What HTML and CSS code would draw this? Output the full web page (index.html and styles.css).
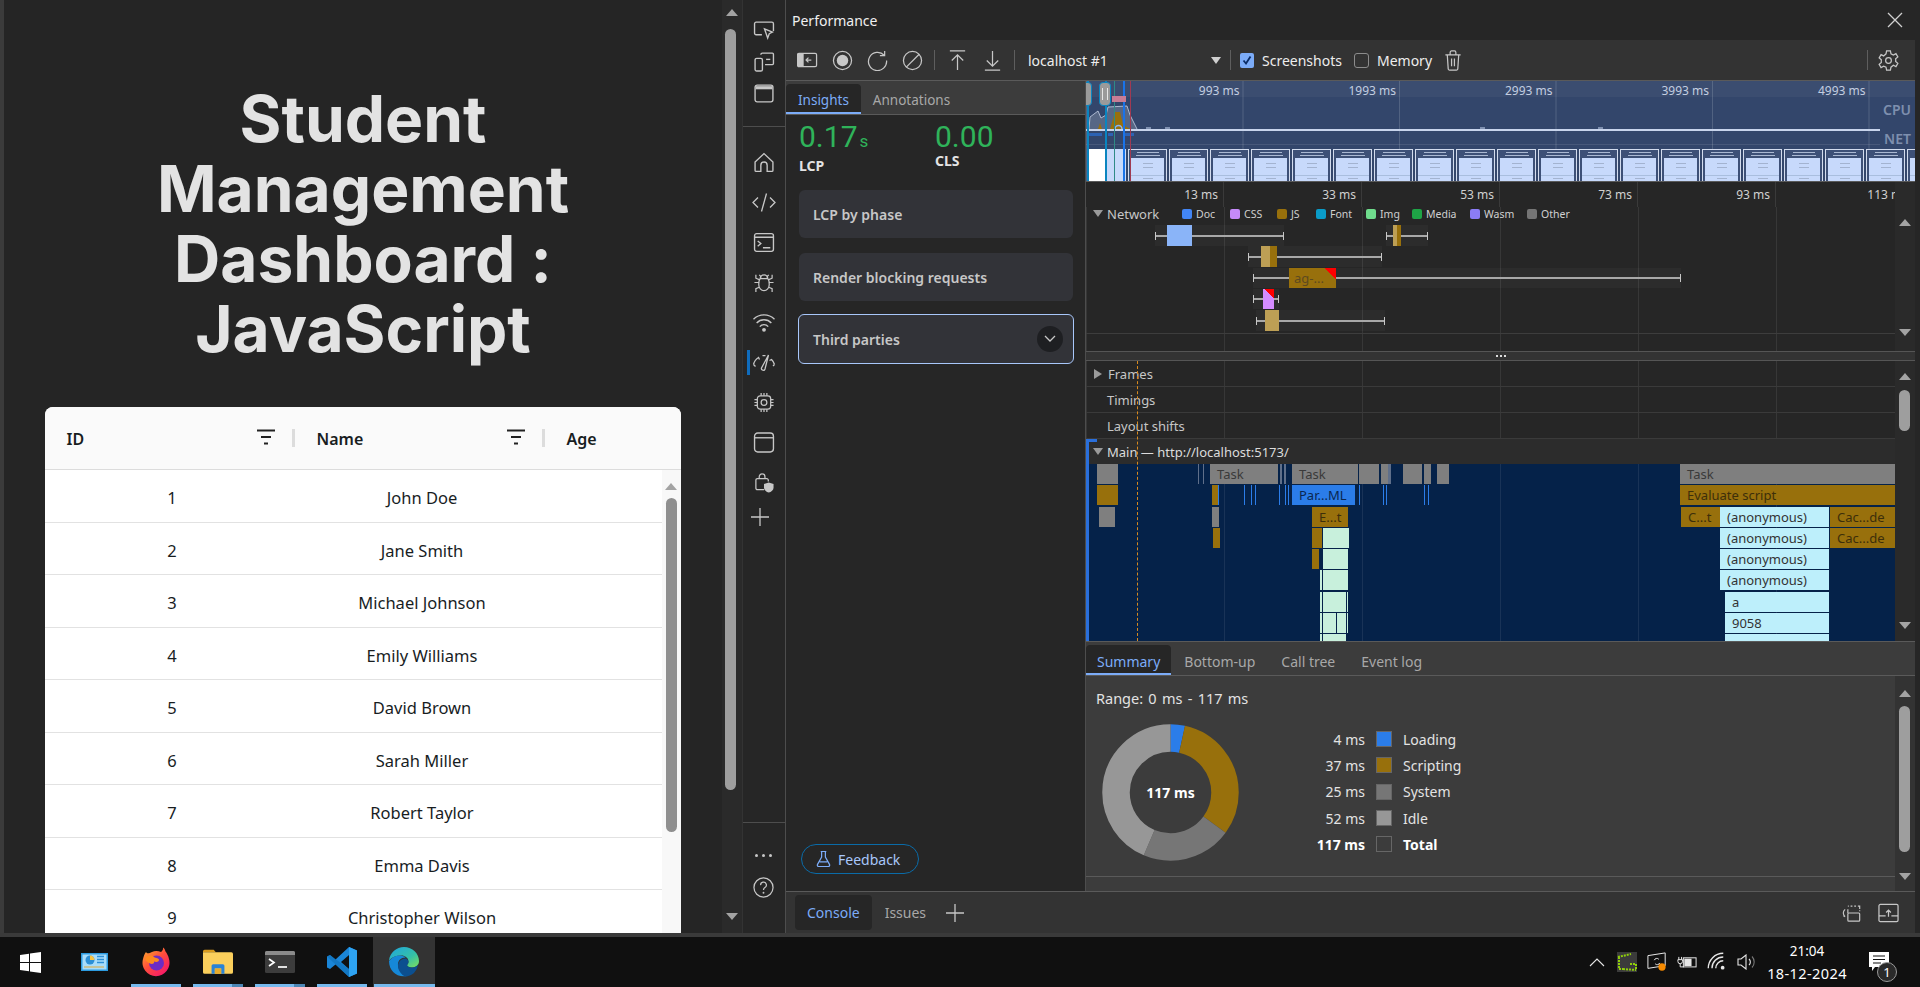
FILE: index.html
```html
<!DOCTYPE html>
<html lang="en">
<head>
    <meta charset="UTF-8">
    <title>Student Management Dashboard : JavaScript</title>
    <link rel="stylesheet" href="styles.css">
</head>
<body>
    <div class="desktop">
        <!-- The page being inspected -->
        <main class="page-pane">
            <h1 class="page-title">Student Management Dashboard : JavaScript</h1>
            <div class="grid-card">
                <div class="grid-head">
                    <div class="grid-col">
                        <span>ID</span>
                        <svg class="filter-icon" viewBox="0 0 18 16"><path d="M0 1.5h18M4 8h10M7 14.5h4" /></svg>
                        <i class="grid-sep"></i>
                    </div>
                    <div class="grid-col">
                        <span>Name</span>
                        <svg class="filter-icon" viewBox="0 0 18 16"><path d="M0 1.5h18M4 8h10M7 14.5h4" /></svg>
                        <i class="grid-sep"></i>
                    </div>
                    <div class="grid-col"><span>Age</span></div>
                </div>
                <div class="grid-body">
                    <div class="grid-rows">
                        <div class="grid-row"><div>1</div><div>John Doe</div></div>
                        <div class="grid-row"><div>2</div><div>Jane Smith</div></div>
                        <div class="grid-row"><div>3</div><div>Michael Johnson</div></div>
                        <div class="grid-row"><div>4</div><div>Emily Williams</div></div>
                        <div class="grid-row"><div>5</div><div>David Brown</div></div>
                        <div class="grid-row"><div>6</div><div>Sarah Miller</div></div>
                        <div class="grid-row"><div>7</div><div>Robert Taylor</div></div>
                        <div class="grid-row"><div>8</div><div>Emma Davis</div></div>
                        <div class="grid-row"><div>9</div><div>Christopher Wilson</div></div>
                    </div>
                    <div class="grid-scroll">
                        <i class="arrow-up grid-arrow"></i>
                        <div class="grid-thumb"></div>
                    </div>
                </div>
            </div>
        </main>

        <div class="page-scroll">
            <i class="arrow-up page-arrow-up"></i>
            <div class="page-thumb"></div>
            <i class="arrow-down page-arrow-down"></i>
        </div>

        <!-- Devtools activity bar -->
        <nav class="dev-nav">
            <div class="nav-top">
                <div class="nav-item"><svg viewBox="0 0 20 20"><path d="M8 15H2.500A1.500 1.500 0 0 1 1 13.500v-9A1.500 1.500 0 0 1 2.500 3h15A1.500 1.500 0 0 1 19 4.500v7" /><path d="M10.500 9.500l7.500 3-3 1.500-1.500 4z" /></svg></div>
                <div class="nav-item"><svg viewBox="0 0 20 20"><path d="M7 3.500A1.500 1.500 0 0 1 8.500 2H18a1 1 0 0 1 1 1v9a1 1 0 0 1-1 1h-7" /><rect x="1.500" y="7" width="7" height="12" rx="1.500" /><path d="M12 8h4" /></svg></div>
                <div class="nav-item"><svg viewBox="0 0 20 20"><rect x="1.500" y="2" width="17" height="16" rx="2" /><path class="icon-fill" d="M2 3h16v3H2z" /></svg></div>
            </div>
            <div class="nav-main">
                <div class="nav-item"><svg viewBox="0 0 20 20"><path d="M1.500 9.500L10 1.500l8.500 8v8a1 1 0 0 1-1 1H13v-6a3 3 0 0 0-6 0v6H2.500a1 1 0 0 1-1-1z" /></svg></div>
                <div class="nav-item"><svg viewBox="0 0 24 20"><path d="M6 5l-5 5 5 5M18 5l5 5-5 5M14.500 1l-5 18" /></svg></div>
                <div class="nav-item"><svg viewBox="0 0 20 20"><rect x="1" y="1.500" width="18" height="17" rx="2" /><path d="M1 5h18M4 8.500l3 2.500-3 2.500M9 15h7" /></svg></div>
                <div class="nav-item"><svg viewBox="0 0 22 22"><path d="M7 7a4 4 0 0 1 8 0c1 1 1.500 3 1.500 6a5.500 6.500 0 0 1-11 0c0-3 .5-5 1.500-6zM7 7h8M6 3l2.500 2.500M16 3l-2.500 2.500M5.500 11H1M16.500 11H21M6 16l-3.500 1.500V21M16 16l3.500 1.500V21M6 8L2.500 6.500V3M16 8l3.500-1.500V3" /></svg></div>
                <div class="nav-item"><svg viewBox="0 0 22 20"><path d="M1 7a14 14 0 0 1 20 0M4 10.500a9.500 9.500 0 0 1 14 0M7 14a5 5 0 0 1 8 0" /><circle class="icon-fill" cx="11" cy="17" r="1.800" /></svg></div>
                <div class="nav-item nav-active"><svg viewBox="0 0 24 20"><path d="M1.500 12a11 11 0 0 1 5-7l1 2M22.500 12a11 11 0 0 0-3-5l-2 1M10.500 3.200a10 10 0 0 1 3 0M1.500 12l2 2M22.500 12l-1.500 1.500" /><path d="M16.500 2.500l-3.500 14a1.800 1.800 0 0 1-3.500-1z" /></svg></div>
                <div class="nav-item"><svg viewBox="0 0 22 22"><rect x="4" y="4" width="14" height="14" rx="3" /><circle cx="11" cy="11" r="3" /><path d="M8 1v3M11 1v3M14 1v3M8 18v3M11 18v3M14 18v3M1 8h3M1 11h3M1 14h3M18 8h3M18 11h3M18 14h3" /></svg></div>
                <div class="nav-item"><svg viewBox="0 0 20 20"><rect x="1" y="1" width="18" height="18" rx="3" /><path d="M1 5.500h18" /></svg></div>
                <div class="nav-item"><svg viewBox="0 0 22 22"><path d="M11 18.500H4a1.500 1.500 0 0 1-1.500-1.500V8.500A1.500 1.500 0 0 1 4 7h10a1.500 1.500 0 0 1 1.500 1.500V10M6 7V5a3 3 0 0 1 6 0v2" /><path class="icon-fill" d="M16 11l5 1.500v4c0 2.500-2.500 4.500-5 5-2.500-.5-5-2.500-5-5v-4z" /></svg></div>
                <div class="nav-plus"><svg viewBox="0 0 18 18"><path d="M9 0v18M0 9h18" /></svg></div>
            </div>
            <div class="nav-bottom">
                <div class="nav-dots"><i></i><i></i><i></i></div>
                <div class="nav-help"><svg viewBox="0 0 22 22"><circle cx="11" cy="11" r="10" /><path d="M8 8.500a3 3 0 1 1 4.500 2.500c-1 .6-1.500 1.200-1.500 2.500" /><circle class="icon-fill" cx="11" cy="16.500" r="1" /></svg></div>
            </div>
        </nav>

        <section class="dev-main">
            <header class="panel-title">
                <span>Performance</span>
                <svg class="close-icon" viewBox="0 0 16 16"><path d="M1 1l14 14M15 1L1 15" /></svg>
            </header>

            <div class="toolbar">
                <div class="tool-btn"><svg viewBox="0 0 22 18"><rect x=".5" y="1.500" width="20" height="14" rx="1.500" /><path class="icon-fill" d="M1 2h6v13H1z" /><path d="M15 8.500H10M12 6l-2.500 2.500L12 11" /></svg></div>
                <div class="tool-btn"><svg viewBox="0 0 22 22"><circle cx="11" cy="11" r="9.500" /><circle class="icon-fill" cx="11" cy="11" r="6" /></svg></div>
                <div class="tool-btn"><svg viewBox="0 0 22 22"><path d="M18 5.500A9.500 9.500 0 1 0 20.500 11M18.500 1v5h-5" /></svg></div>
                <div class="tool-btn"><svg viewBox="0 0 22 22"><circle cx="11" cy="11" r="9.500" /><path d="M4.500 18L18 4.500" /></svg></div>
                <i class="tool-sep"></i>
                <div class="tool-btn tool-gap"><svg viewBox="0 0 18 22"><path d="M1 1h16M9 21V5M3 11l6-6 6 6" /></svg></div>
                <div class="tool-btn"><svg viewBox="0 0 18 22"><path d="M1 21h16M9 1v16M3 11l6 6 6-6" /></svg></div>
                <i class="tool-sep"></i>
                <div class="target-select">
                    <span>localhost #1</span>
                    <i class="arrow-down target-arrow"></i>
                </div>
                <i class="tool-sep"></i>
                <label class="tool-check">
                    <svg class="check-on" viewBox="0 0 14 15"><rect width="14" height="15" rx="2" /><path d="M3.500 7.500l2.500 3 4.500-7" /></svg>
                    <span>Screenshots</span>
                </label>
                <label class="tool-check tool-check-off">
                    <i class="check-off"></i>
                    <span>Memory</span>
                </label>
                <svg class="trash-icon" viewBox="0 0 18 22"><path d="M1 5h16M6 5V2.500A1.500 1.500 0 0 1 7.500 1h3A1.500 1.500 0 0 1 12 2.500V5M3 5l1 15a1.500 1.500 0 0 0 1.500 1h7a1.500 1.500 0 0 0 1.500-1l1-15M7.500 9v8M10.500 9v8" /></svg>
                <i class="tool-sep tool-sep-end"></i>
                <svg class="gear-icon" viewBox="0 0 22 22"><path d="M9 1h4l.6 3 2.500 1.200 2.700-1.400 2 3.400-2.300 2 .1 1.400-.1 1.400 2.300 2-2 3.400-2.700-1.400L13.600 18l-.6 3H9l-.6-3-2.500-1-2.700 1.400-2-3.400 2.300-2-.1-1.400.1-1.400-2.300-2 2-3.400 2.700 1.400L8.400 4z" /><circle cx="11" cy="11" r="3" /></svg>
            </div>

            <div class="panel-body">
                <aside class="insights">
                    <div class="tabs insights-tabs">
                        <span class="tab tab-active">Insights</span>
                        <span class="tab">Annotations</span>
                    </div>
                    <div class="metrics">
                        <div class="metric">
                            <div class="metric-value">0.17<small>s</small></div>
                            <div class="metric-label">LCP</div>
                        </div>
                        <div class="metric">
                            <div class="metric-value">0.00</div>
                            <div class="metric-label">CLS</div>
                        </div>
                    </div>
                    <div class="insight-card">LCP by phase</div>
                    <div class="insight-card">Render blocking requests</div>
                    <div class="insight-card insight-open">
                        <span>Third parties</span>
                        <span class="card-toggle"><svg viewBox="0 0 12 8"><path d="M1 1l5 5 5-5" /></svg></span>
                    </div>
                    <div class="feedback">
                        <svg viewBox="0 0 16 18"><path d="M5 1h6M6 1v6L1.500 15a1.500 1.500 0 0 0 1.300 2h10.400a1.500 1.500 0 0 0 1.300-2L10 7V1M4 12h8" /></svg>
                        <span>Feedback</span>
                    </div>
                </aside>

                <div class="timeline">
                    <!-- Overview strip -->
                    <div class="overview">
                        <div class="overview-ticks">
                            <span>993 ms</span><span>1993 ms</span><span>2993 ms</span><span>3993 ms</span><span>4993 ms</span>
                        </div>
                        <div class="overview-charts">
                            <svg class="cpu-chart" viewBox="0 0 60 24">
                                <path class="cpu-idle" d="M0 24l1-12 8-6 3 7 5-3 2-8 19-1 3 9 5 10 2 4z" />
                                <path class="cpu-js" d="M9 24l2-6 2 6zM21 24l5-17h5l3 13 7 4z" />
                                <path class="cpu-line" d="M0 24l1-12 8-6 3 7 5-3 2-8 19-1 3 9 5 10 2 4" />
                                <path class="cpu-net" d="M26 24a3.500 3.500 0 0 1 7 0" />
                            </svg>
                            <i class="cpu-bump" style="left:60px"></i>
                            <i class="cpu-bump" style="left:79px"></i>
                            <i class="cpu-bump" style="left:394px"></i>
                            <i class="cpu-bump" style="left:512px"></i>
                            <span class="cpu-label">CPU</span>
                            <span class="net-label">NET</span>
                            <i class="net-blip blip-a"></i>
                            <i class="net-blip blip-b"></i>
                            <i class="net-blip blip-c"></i>
                        </div>
                        <div class="shots">
                            <div class="shot shot-first"></div>
                            <div class="shot"></div><div class="shot"></div><div class="shot"></div><div class="shot"></div>
                            <div class="shot"></div><div class="shot"></div><div class="shot"></div><div class="shot"></div>
                            <div class="shot"></div><div class="shot"></div><div class="shot"></div><div class="shot"></div>
                            <div class="shot"></div><div class="shot"></div><div class="shot"></div><div class="shot"></div>
                            <div class="shot"></div><div class="shot"></div><div class="shot"></div><div class="shot"></div>
                        </div>
                        <i class="mark mark-a"></i>
                        <i class="mark mark-b"></i>
                        <i class="mark mark-c"></i>
                        <i class="mark mark-d"></i>
                        <i class="mark mark-e"></i>
                        <i class="lcp-flag"></i>
                        <i class="handle handle-left"></i>
                        <i class="handle handle-right"></i>
                    </div>

                    <div class="ruler-wrap">
                        <div class="ruler">
                            <span>13 ms</span><span>33 ms</span><span>53 ms</span><span>73 ms</span><span>93 ms</span><span>113 ms</span>
                        </div>
                        <div class="gutter"></div>
                    </div>

                    <!-- Network track -->
                    <div class="network">
                        <div class="net-canvas grid-lines">
                            <div class="net-head">
                                <i class="arrow-down track-arrow"></i>
                                <span class="track-name">Network</span>
                                <div class="legend">
                                    <span class="legend-item legend-doc">Doc</span>
                                    <span class="legend-item legend-css">CSS</span>
                                    <span class="legend-item legend-js">JS</span>
                                    <span class="legend-item legend-font">Font</span>
                                    <span class="legend-item legend-img">Img</span>
                                    <span class="legend-item legend-media">Media</span>
                                    <span class="legend-item legend-wasm">Wasm</span>
                                    <span class="legend-item legend-other">Other</span>
                                </div>
                            </div>
                            <div class="net-row">
                                <div class="net-item" style="left:69px;width:129px"><i class="net-box box-doc" style="left:12px;width:25px"></i></div>
                                <div class="net-item" style="left:300px;width:42px"><i class="net-box box-tan" style="left:7px;width:8px"></i></div>
                            </div>
                            <div class="net-row">
                                <div class="net-item" style="left:162px;width:134px"><i class="net-box box-tan" style="left:13px;width:16px"></i></div>
                            </div>
                            <div class="net-row">
                                <div class="net-item" style="left:167px;width:428px"><i class="net-box box-js" style="left:36px;width:47px">ag-...</i></div>
                            </div>
                            <div class="net-row">
                                <div class="net-item" style="left:167px;width:26px"><i class="net-box box-css" style="left:10px;width:11px"></i></div>
                            </div>
                            <div class="net-row">
                                <div class="net-item" style="left:170px;width:129px"><i class="net-box box-light" style="left:9px;width:14px"></i></div>
                            </div>
                            <div class="net-end"></div>
                        </div>
                        <div class="gutter">
                            <i class="arrow-up gutter-up"></i>
                            <i class="arrow-down gutter-down net-down"></i>
                        </div>
                    </div>

                    <div class="splitter"><i></i><i></i><i></i></div>

                    <!-- Thread tracks -->
                    <div class="tracks">
                        <div class="tracks-canvas grid-lines">
                            <div class="track-row"><i class="arrow-right track-arrow-side"></i><span class="track-name">Frames</span></div>
                            <div class="track-row"><span class="track-name track-indent">Timings</span></div>
                            <div class="track-row"><span class="track-name track-indent">Layout shifts</span></div>
                            <div class="main-head"><i class="arrow-down track-arrow"></i><span class="track-name">Main — http://localhost:5173/</span></div>
                            <div class="flame grid-lines">
                                <div class="flame-row">
                                    <i class="fb fb-task" style="left:11px;width:21px"></i>
                                    <i class="fb fb-tick" style="left:112px;width:1px"></i>
                                    <i class="fb fb-tick" style="left:117px;width:1px"></i>
                                    <i class="fb fb-task" style="left:124px;width:68px">Task</i>
                                    <i class="fb fb-tick" style="left:194px;width:2px"></i>
                                    <i class="fb fb-tick" style="left:198px;width:2px"></i>
                                    <i class="fb fb-task" style="left:206px;width:66px">Task</i>
                                    <i class="fb fb-task" style="left:273px;width:20px"></i>
                                    <i class="fb fb-task" style="left:295px;width:6px"></i>
                                    <i class="fb fb-tick" style="left:302px;width:3px"></i>
                                    <i class="fb fb-task" style="left:317px;width:19px"></i>
                                    <i class="fb fb-task" style="left:338px;width:5px"></i>
                                    <i class="fb fb-task" style="left:351px;width:12px"></i>
                                    <i class="fb fb-task" style="left:594px;width:215px">Task</i>
                                </div>
                                <div class="flame-row">
                                    <i class="fb fb-js" style="left:11px;width:21px"></i>
                                    <i class="fb fb-js" style="left:126px;width:5px"></i>
                                    <i class="fb fb-blue" style="left:132px;width:1px"></i>
                                    <i class="fb fb-blue" style="left:158px;width:1px"></i>
                                    <i class="fb fb-blue" style="left:165px;width:1px"></i>
                                    <i class="fb fb-blue" style="left:169px;width:1px"></i>
                                    <i class="fb fb-blue" style="left:193px;width:1px"></i>
                                    <i class="fb fb-blue" style="left:199px;width:1px"></i>
                                    <i class="fb fb-blue" style="left:202px;width:1px"></i>
                                    <i class="fb fb-blue fb-label" style="left:206px;width:63px">Par...ML</i>
                                    <i class="fb fb-blue" style="left:273px;width:1px"></i>
                                    <i class="fb fb-blue" style="left:297px;width:1px"></i>
                                    <i class="fb fb-blue" style="left:300px;width:1px"></i>
                                    <i class="fb fb-blue" style="left:338px;width:1px"></i>
                                    <i class="fb fb-blue" style="left:342px;width:1px"></i>
                                    <i class="fb fb-js" style="left:594px;width:215px">Evaluate script</i>
                                </div>
                                <div class="flame-row">
                                    <i class="fb fb-task" style="left:13px;width:16px"></i>
                                    <i class="fb fb-task" style="left:126px;width:4px"></i>
                                    <i class="fb fb-js" style="left:226px;width:36px">E...t</i>
                                    <i class="fb fb-js" style="left:595px;width:39px">C...t</i>
                                    <i class="fb fb-fn" style="left:634px;width:109px">(anonymous)</i>
                                    <i class="fb fb-js" style="left:744px;width:65px">Cac...de</i>
                                </div>
                                <div class="flame-row">
                                    <i class="fb fb-js" style="left:127px;width:4px"></i>
                                    <i class="fb fb-js" style="left:226px;width:10px"></i>
                                    <i class="fb fb-green" style="left:237px;width:26px"></i>
                                    <i class="fb fb-fn" style="left:634px;width:109px">(anonymous)</i>
                                    <i class="fb fb-js" style="left:744px;width:65px">Cac...de</i>
                                </div>
                                <div class="flame-row">
                                    <i class="fb fb-js" style="left:226px;width:6px"></i>
                                    <i class="fb fb-green" style="left:237px;width:25px"></i>
                                    <i class="fb fb-fn" style="left:634px;width:109px">(anonymous)</i>
                                </div>
                                <div class="flame-row">
                                    <i class="fb fb-green" style="left:234px;width:2px"></i>
                                    <i class="fb fb-green" style="left:237px;width:25px"></i>
                                    <i class="fb fb-fn" style="left:634px;width:109px">(anonymous)</i>
                                </div>
                                <div class="flame-row">
                                    <i class="fb fb-green" style="left:234px;width:2px"></i>
                                    <i class="fb fb-green" style="left:237px;width:23px"></i>
                                    <i class="fb fb-green" style="left:261px;width:1px"></i>
                                    <i class="fb fb-fn" style="left:639px;width:104px">a</i>
                                </div>
                                <div class="flame-row">
                                    <i class="fb fb-green" style="left:234px;width:2px"></i>
                                    <i class="fb fb-green" style="left:237px;width:13px"></i>
                                    <i class="fb fb-green" style="left:251px;width:9px"></i>
                                    <i class="fb fb-green" style="left:261px;width:1px"></i>
                                    <i class="fb fb-fn" style="left:639px;width:104px">9058</i>
                                </div>
                                <div class="flame-row">
                                    <i class="fb fb-green" style="left:234px;width:2px"></i>
                                    <i class="fb fb-green" style="left:237px;width:23px"></i>
                                    <i class="fb fb-fn" style="left:639px;width:104px"></i>
                                </div>
                            </div>
                            <i class="main-select"></i>
                            <i class="dcl-line"></i>
                        </div>
                        <div class="gutter">
                            <i class="arrow-up gutter-up"></i>
                            <div class="gutter-thumb tracks-thumb"></div>
                            <i class="arrow-down gutter-down tracks-down"></i>
                        </div>
                    </div>

                    <!-- Details -->
                    <div class="details">
                        <div class="tabs details-tabs">
                            <span class="tab tab-active">Summary</span>
                            <span class="tab">Bottom-up</span>
                            <span class="tab">Call tree</span>
                            <span class="tab">Event log</span>
                        </div>
                        <div class="details-body">
                            <div class="summary">
                                <div class="summary-main">
                                    <div class="range">Range: 0 ms - 117 ms</div>
                                    <div class="summary-row">
                                        <div class="donut">
                                            <svg viewBox="0 0 137 137">
                                                <g transform="rotate(-90 68.500 68.500)">
                                                    <circle class="slice-loading" cx="68.500" cy="68.500" r="54.500" pathLength="117" stroke-dasharray="4 113" stroke-dashoffset="0" />
                                                    <circle class="slice-scripting" cx="68.500" cy="68.500" r="54.500" pathLength="117" stroke-dasharray="37 80" stroke-dashoffset="-4" />
                                                    <circle class="slice-system" cx="68.500" cy="68.500" r="54.500" pathLength="117" stroke-dasharray="25 92" stroke-dashoffset="-41" />
                                                    <circle class="slice-idle" cx="68.500" cy="68.500" r="54.500" pathLength="117" stroke-dasharray="51 66" stroke-dashoffset="-66" />
                                                </g>
                                            </svg>
                                            <span class="donut-total">117 ms</span>
                                        </div>
                                        <div class="summary-legend">
                                            <span>4 ms</span><i class="swatch swatch-loading"></i><span>Loading</span>
                                            <span>37 ms</span><i class="swatch swatch-scripting"></i><span>Scripting</span>
                                            <span>25 ms</span><i class="swatch swatch-system"></i><span>System</span>
                                            <span>52 ms</span><i class="swatch swatch-idle"></i><span>Idle</span>
                                            <b>117 ms</b><i class="swatch swatch-total"></i><b>Total</b>
                                        </div>
                                    </div>
                                </div>
                                <div class="summary-foot"></div>
                            </div>
                            <div class="gutter gutter-light">
                                <i class="arrow-up gutter-up details-up"></i>
                                <div class="gutter-thumb details-thumb"></div>
                                <i class="arrow-down gutter-down details-down"></i>
                            </div>
                        </div>
                    </div>
                </div>
            </div>

            <div class="drawer">
                <span class="drawer-tab drawer-active">Console</span>
                <span class="drawer-tab">Issues</span>
                <svg class="drawer-plus" viewBox="0 0 18 18"><path d="M9 0v18M0 9h18" /></svg>
                <svg class="drawer-icon drawer-icon-first" viewBox="0 0 22 22"><path d="M7 3.500h1M10 3.500h2M14 3.500h2M18 3.500h2v3M20 8v1" /><rect x="7" y="11" width="13" height="9" rx="1" /><path d="M7 11V7M4 7a5 5 0 0 0 0 8M4 15l-2-1" /></svg>
                <svg class="drawer-icon" viewBox="0 0 22 20"><rect x="1" y="1" width="20" height="18" rx="1.500" /><path d="M1 13h7M14 13h7M11 14V7M8.500 9.500L11 7l2.500 2.500" /></svg>
            </div>
        </section>
    </div>

    <div class="screen-strip"></div>

    <!-- Windows taskbar -->
    <footer class="taskbar">
        <div class="start-btn">
            <svg viewBox="0 0 21 21"><path d="M0 3l9-1.300V10H0zM10 1.500L21 0v10H10zM0 11h9v8.300L0 18zM10 11h11v10l-11-1.500z" /></svg>
        </div>
        <div class="task-item">
            <svg class="app-panel" viewBox="0 0 27 18">
                <rect width="27" height="18" fill="#2c9be0" />
                <rect x="1.500" y="1.500" width="24" height="15" fill="#a8dcfa" />
                <circle cx="9" cy="7" r="4.500" fill="#2c8fd6" />
                <path d="M9 7V2.500A4.500 4.500 0 0 1 13.500 7z" fill="#f6c343" />
                <path d="M16 3.500h7M16 6.500h7M16 9.500h7" stroke="#2c8fd6" stroke-width="1.300" />
                <path d="M3 14h20" stroke="#e0a93a" stroke-width="1" />
            </svg>
        </div>
        <div class="task-item task-open">
            <svg class="app-icon" viewBox="0 0 30 30">
                <defs>
                    <linearGradient id="foxBody" x1="0" y1="0" x2=".8" y2="1">
                        <stop offset="0" stop-color="#ffb32c" />
                        <stop offset=".5" stop-color="#ff4f3b" />
                        <stop offset="1" stop-color="#f5156c" />
                    </linearGradient>
                </defs>
                <path d="M2 12a13.500 13.500 0 1 0 26 0c-.6-3-2-5.500-3.500-7.500-.3-1.500-1-3-2.500-4 .3 2-.5 3.500-2 4.500-3-1.500-6.500-1.500-9 0C8 6.500 6 7 5 5c-1.500 2-2.500 4.500-3 7z" fill="url(#foxBody)" />
                <circle cx="15.500" cy="16" r="7.500" fill="#6e2cc4" />
                <path d="M4 11c3-3 7-3 9-1 2 1.500 5 1 5 3 0 2-3 2.500-5 1.500 1 2-2 3-4 2-3-1-5-3-5-5.500z" fill="#ff8a1f" />
            </svg>
        </div>
        <div class="task-item task-open task-multi">
            <svg class="app-icon" viewBox="0 0 28 24">
                <path d="M0 2a1.500 1.500 0 0 1 1.500-1.500H10l2 2.500H0z" fill="#d99b1d" />
                <path d="M0 3h26.500A1.500 1.500 0 0 1 28 4.500v17a1.500 1.500 0 0 1-1.500 1.500h-25A1.500 1.500 0 0 1 0 21.500z" fill="#fbcf5c" />
                <path d="M8 23v-7.500A1.500 1.500 0 0 1 9.500 14h9a1.500 1.500 0 0 1 1.500 1.500V23h-3v-5h-6v5z" fill="#2a83d6" />
                <path d="M11 18h6v5h-6z" fill="#e8ac2d" />
            </svg>
        </div>
        <div class="task-item task-open task-multi">
            <svg class="app-icon" viewBox="0 0 30 22">
                <rect width="30" height="22" rx="1.500" fill="#3c3c3c" />
                <path d="M1.500 0h27A1.500 1.500 0 0 1 30 1.500V4H0V1.500A1.500 1.500 0 0 1 1.500 0z" fill="#8b8b8b" />
                <path d="M4 8l5 3.500-5 3.500" fill="none" stroke="#fff" stroke-width="1.700" />
                <path d="M13 16h9" stroke="#fff" stroke-width="1.700" />
            </svg>
        </div>
        <div class="task-item task-open">
            <svg class="app-icon" viewBox="0 0 30 30">
                <path d="M22 0l8 3.500v23L22 30 8.500 17.500 3 22 0 20.500v-11L3 8l5.500 4.500z" fill="#1a86d8" />
                <path d="M22 8l-8 7 8 7z" fill="#101010" />
                <path d="M22 0l8 3.500v23L22 30z" fill="#2ea3f2" />
                <path d="M3 8l19 14v8L0 9.500z" fill="#0f6fb8" opacity=".6" />
            </svg>
        </div>
        <div class="task-item task-active">
            <svg class="app-icon" viewBox="0 0 30 30">
                <defs>
                    <linearGradient id="edgeTop" x1="0" y1="0" x2="1" y2="1">
                        <stop offset="0" stop-color="#1fa5e0" />
                        <stop offset=".6" stop-color="#35c1a6" />
                        <stop offset="1" stop-color="#7fe05a" />
                    </linearGradient>
                </defs>
                <path d="M0 13.500C1 5.500 7.500 0 15 0c8.500 0 15 6.500 15 14 0 4-3 6.500-7 6.500-3 0-5-1-5-2.500 1-1 1.500-2 1.500-3.500 0-3.500-3.500-6-7-6C7 8.500 3 10 0 13.500z" fill="url(#edgeTop)" />
                <path d="M0 14c3-4 7-5.500 10.500-5.500 3 0 5.500 1 6 2-5 0-8 3.500-7.500 8 .5 5 4.500 8.500 9 10.500C8 31 0 24 0 14z" fill="#1688d8" />
                <path d="M9 19c0-4.500 3.500-7.500 8-7.500 1.500 1 2.500 2 2.500 3.500 0 1-.5 2-1.500 3 .5 2 3 2.500 5 2.500 2 0 5-1 6-3-1 7-6 12-13 12C13 28 9 24 9 19z" fill="#0c4f8f" />
            </svg>
        </div>
        <div class="tray">
            <div class="tray-item"><svg viewBox="0 0 16 9"><path d="M1 8l7-7 7 7" /></svg></div>
            <div class="tray-item">
                <svg class="tray-app" viewBox="0 0 20 20">
                    <rect width="20" height="20" fill="#3b3b3b" />
                    <path d="M1 5l13-3M2 5v12h4M6 17l13 1M13 12h6v6" fill="none" stroke="#8fcf0a" stroke-width="2" stroke-dasharray="2 1" />
                </svg>
            </div>
            <div class="tray-item">
                <svg class="tray-wide" viewBox="0 0 22 22"><path d="M1 4l19-3v14L1 18zM8 9a3 3 0 0 1 5-1M14 12a3 3 0 0 1-5 1" /><circle cx="16.500" cy="16.500" r="4" fill="#f78b00" stroke="none" /></svg>
            </div>
            <div class="tray-item">
                <svg class="tray-wide" viewBox="0 0 22 14"><path d="M2 1v3M5 1v3M1 4h5v2a2.500 2.500 0 0 1-5 0zM3.500 8.500V12h4" /><rect x="7" y="2" width="14" height="10" /><path class="icon-fill" d="M8 3h8v8H8z" /></svg>
            </div>
            <div class="tray-item">
                <svg class="tray-wide" viewBox="0 0 16 16"><path d="M1 13A12 12 0 0 1 13 1M4 13a9 9 0 0 1 9-9M7 13a6 6 0 0 1 6-6" /><circle class="icon-fill" cx="12.500" cy="12.500" r="1.500" /></svg>
            </div>
            <div class="tray-item">
                <svg class="tray-wide" viewBox="0 0 20 16"><path d="M1 5h3l5-4v14l-5-4H1z" /><path d="M12 5a4 4 0 0 1 0 6" /><path class="tray-dim" d="M15 2.500a8 8 0 0 1 0 11" /></svg>
            </div>
            <div class="clock">
                <div class="clock-time">21:04</div>
                <div class="clock-date">18-12-2024</div>
            </div>
            <div class="notify">
                <svg viewBox="0 0 20 20"><path d="M0 0h20v15H6l-3 4v-4H0z" fill="#fff" /><path d="M4 4h12M4 7.500h12M4 11h8" stroke="#101010" stroke-width="1.200" /></svg>
                <span class="notify-badge">1</span>
            </div>
        </div>
    </footer>
</body>
</html>
```

FILE: styles.css
```css
* {
    box-sizing: border-box;
}
html, body {
    margin: 0;
    padding: 0;
    height: 100%;
    overflow: hidden;
}
body {
    font-family: "Noto Sans", Arial, sans-serif;
    font-size: 13px;
    background-color: #101010;
    color: #e3e3e3;
}
i {
    font-style: normal;
    display: block;
}
svg {
    display: block;
    fill: none;
    stroke: #c7c7c7;
    stroke-width: 1.3;
}
.icon-fill {
    fill: #c7c7c7;
    stroke: none;
}
.desktop {
    display: flex;
    height: 933px;
}

/* little scrollbar triangles */
.arrow-up, .arrow-down, .arrow-right {
    width: 0;
    height: 0;
    border-style: solid;
    border-color: transparent;
}
.arrow-up {
    border-width: 0 6px 7px;
    border-bottom-color: #a3a3a3;
}
.arrow-down {
    border-width: 7px 6px 0;
    border-top-color: #a3a3a3;
}
.arrow-right {
    border-width: 5px 0 5px 8px;
    border-left-color: #8e8e8e;
}

/* inspected page */
.page-pane {
    width: 722px;
    height: 933px;
    overflow: hidden;
    background-color: #252525;
    border-left: 4px solid #3b3b3b;
    padding-top: 84px;
}
.page-title {
    font-family: Inter, Arial, sans-serif;
    font-size: 64px;
    line-height: 70px;
    font-weight: 700;
    color: #e3e3e3;
    text-align: center;
    margin: 0 41px 43px;
}
.grid-card {
    margin: 0 41px;
    background-color: #fff;
    border-radius: 8px 8px 0 0;
    overflow: hidden;
    color: #181d1f;
}
.grid-head {
    display: grid;
    grid-template-columns: 250px 250px 136px;
    height: 63px;
    background-color: #fafafa;
    border-bottom: 1px solid #dcdcdc;
}
.grid-col {
    display: flex;
    align-items: center;
    padding: 2px 0 0 21.500px;
    font-size: 16px;
    font-weight: 600;
    position: relative;
}
.filter-icon {
    width: 18px;
    height: 16px;
    position: absolute;
    right: 20px;
    top: 22px;
    stroke: #222;
    stroke-width: 2;
}
.grid-sep {
    position: absolute;
    right: 0;
    top: 22px;
    width: 3px;
    height: 18px;
    background-color: #dcdcdc;
}
.grid-body {
    display: flex;
    height: 520px;
}
.grid-rows {
    flex: 1;
}
.grid-row {
    display: grid;
    grid-template-columns: 250px 250px;
    height: 52.5px;
    line-height: 56px;
    padding-left: 2px;
    border-bottom: 1px solid #e2e2e2;
    font-size: 16.5px;
    text-align: center;
}
.grid-scroll {
    width: 19px;
    background-color: #f8f8f8;
    padding-top: 13px;
}
.grid-arrow {
    margin: 0 0 8px 3px;
}
.grid-thumb {
    width: 11px;
    height: 334px;
    margin-left: 4px;
    background-color: #8f8f8f;
    border-radius: 6px;
}
.page-scroll {
    width: 20px;
    background-color: #2a2a2a;
    padding: 9px 0 0 3px;
}
.page-arrow-up {
    margin-left: 1px;
}
.page-thumb {
    width: 11px;
    height: 761px;
    margin-top: 13px;
    background-color: #9e9e9e;
    border-radius: 6px;
}
.page-arrow-down {
    margin: 123px 0 0 1px;
}

/* devtools activity bar */
.dev-nav {
    width: 44px;
    display: flex;
    flex-direction: column;
    background-color: #262626;
    border-right: 1px solid #4d4d4d;
    border-left: 1px solid #333;
}
.nav-top {
    padding-top: 13px;
    padding-bottom: 17px;
    border-bottom: 1px solid #4d4d4d;
}
.nav-top .nav-item {
    height: 32px;
}
.nav-main {
    padding-top: 15px;
}
.nav-item {
    height: 40px;
    display: flex;
    align-items: center;
    justify-content: center;
    position: relative;
}
.nav-item svg {
    width: 24px;
    height: 21px;
}
.nav-active::before {
    content: "";
    position: absolute;
    left: 4px;
    top: 8px;
    width: 3px;
    height: 25px;
    background-color: #0f6cbd;
}
.nav-plus {
    height: 30px;
    padding: 6px 0 0 8px;
}
.nav-plus svg {
    width: 18px;
    height: 18px;
}
.nav-bottom {
    margin-top: auto;
    height: 111px;
    border-top: 1px solid #4d4d4d;
    padding-top: 31px;
}
.nav-dots {
    display: flex;
    gap: 4px;
    justify-content: center;
    padding-right: 2px;
}
.nav-dots i {
    width: 3px;
    height: 3px;
    background-color: #c7c7c7;
    border-radius: 50%;
}
.nav-help {
    margin-top: 20px;
    display: flex;
    justify-content: center;
    padding-right: 2px;
}
.nav-help svg {
    width: 21px;
    height: 21px;
}

/* devtools panel */
.dev-main {
    flex: 1;
    min-width: 0;
    display: flex;
    flex-direction: column;
    background-color: #262626;
    padding-right: 5px;
}
.panel-title {
    height: 40px;
    display: flex;
    align-items: center;
    justify-content: space-between;
    padding: 0 12px 0 6px;
    font-size: 14px;
    color: #f0f0f0;
}
.close-icon {
    width: 16px;
    height: 16px;
    stroke: #d0d0d0;
}
.toolbar {
    height: 41px;
    display: flex;
    align-items: center;
    background-color: #333;
    border-bottom: 1px solid #5a5a5a;
    padding-left: 4px;
}
.tool-btn {
    width: 35px;
    display: flex;
    justify-content: center;
}
.tool-btn svg {
    width: 21px;
    height: 21px;
}
.tool-gap {
    margin-left: 5px;
}
.tool-sep {
    width: 1px;
    height: 20px;
    background-color: #5e5e5e;
    margin-left: 4px;
}
.target-select {
    width: 211px;
    display: flex;
    align-items: center;
    justify-content: space-between;
    padding: 0 5px 0 13px;
    font-size: 14px;
    color: #ededed;
}
.target-arrow {
    border-width: 7px 5px 0;
    border-top-color: #d0d0d0;
}
.tool-check {
    display: flex;
    align-items: center;
    gap: 8px;
    margin-left: 9px;
    font-size: 14px;
    color: #ededed;
}
.tool-check-off {
    margin-left: 12px;
}
.check-on {
    width: 14px;
    height: 15px;
    fill: #7cacf8;
    stroke: none;
}
.check-on path {
    fill: none;
    stroke: #0a2c66;
    stroke-width: 1.800;
}
.check-off {
    width: 15px;
    height: 15px;
    border: 1.500px solid #8c8c8c;
    border-radius: 3px;
}
.trash-icon {
    width: 18px;
    height: 21px;
    margin-left: 12px;
}
.tool-sep-end {
    margin-left: auto;
    margin-right: 10px;
}
.gear-icon {
    width: 21px;
    height: 21px;
    margin-right: 16px;
}
.panel-body {
    height: 810px;
    display: flex;
}
.tabs {
    display: flex;
    background-color: #3c3c3c;
    border-bottom: 1px solid #5a5a5a;
    font-size: 13.5px;
    color: #a8a8a8;
}
.tab {
    display: flex;
    align-items: center;
    padding: 2px 12px 0;
    margin-top: 3px;
}
.tab-active {
    background-color: #262626;
    color: #7cacf8;
    box-shadow: inset 0 -2px 0 #7cacf8;
    border-radius: 4px 4px 0 0;
}

/* insights sidebar */
.insights {
    width: 300px;
    flex-shrink: 0;
    display: flex;
    flex-direction: column;
    border-right: 1px solid #4d4d4d;
    background-color: #262626;
    padding-bottom: 17px;
}
.insights-tabs {
    height: 34px;
}
.metrics {
    display: grid;
    grid-template-columns: 136px 136px;
    padding: 6px 0 0 13px;
    height: 75px;
}
.metric-value {
    font-family: Roboto, Arial, sans-serif;
    font-size: 30px;
    line-height: 31px;
    color: #2fb35a;
}
.metric-value small {
    font-size: 17px;
    margin-left: 2px;
}
.metric-label {
    font-size: 14px;
    line-height: 18px;
    font-weight: 700;
    color: #e3e3e3;
}
.insight-card {
    height: 48px;
    margin: 0 12px 15px 13px;
    padding: 0 13px 0 14px;
    display: flex;
    align-items: center;
    justify-content: space-between;
    background-color: #323338;
    border-radius: 6px;
    font-size: 14px;
    font-weight: 600;
    color: #c7c7c7;
}
.insight-open {
    height: 50px;
    margin: -2px 11px 0 12px;
    border: 1px solid #a8c7fa;
    padding-right: 10px;
}
.card-toggle {
    width: 26px;
    height: 26px;
    border-radius: 50%;
    background-color: #1e1f22;
    display: flex;
    align-items: center;
    justify-content: center;
}
.card-toggle svg {
    width: 12px;
    height: 8px;
}
.feedback {
    margin: auto 0 0 15px;
    width: 118px;
    height: 30px;
    border: 1px solid #0a6ba8;
    border-radius: 15px;
    display: flex;
    align-items: center;
    gap: 7px;
    padding-left: 14px;
    font-size: 14px;
    color: #a8c7fa;
}
.feedback svg {
    width: 15px;
    height: 18px;
    stroke: #7cacf8;
}

/* overview strip */
.timeline {
    flex: 1;
    min-width: 0;
    display: flex;
    flex-direction: column;
}
.overview {
    height: 101px;
    position: relative;
    background-color: #33466b;
    background-image: linear-gradient(90deg, transparent 155.500px, rgba(255, 255, 255, 0.15) 155.500px);
    background-size: 156.500px 100%;
    background-position: 1px 0;
    border-bottom: 1px solid #5a5a5a;
    overflow: hidden;
}
.overview-ticks {
    display: grid;
    grid-template-columns: repeat(5, 156.500px);
    height: 16px;
    background-color: rgba(255, 255, 255, 0.04);
    font-size: 12px;
    line-height: 20px;
    text-align: right;
    color: #c3cde0;
}
.overview-ticks span {
    padding-right: 3px;
}
.overview-charts {
    height: 48px;
    position: relative;
    border-bottom: 1px solid rgba(255, 255, 255, 0.1);
}
.cpu-chart {
    position: absolute;
    left: 3px;
    top: 8px;
    width: 60px;
    height: 24px;
    stroke: none;
}
.cpu-idle {
    fill: rgba(255, 255, 255, 0.18);
}
.cpu-js {
    fill: #98700c;
}
.cpu-line {
    fill: none;
    stroke: #c7d2e6;
    stroke-width: 0.8;
}
.cpu-net {
    fill: none;
    stroke: #8ab4f8;
    stroke-width: 1.500;
}
.cpu-bump {
    position: absolute;
    top: 30px;
    width: 5px;
    height: 2px;
    background-color: #7f90b0;
}
.overview-charts::before {
    content: "";
    position: absolute;
    left: 0;
    right: 0;
    top: 32px;
    height: 1.500px;
    background-color: #c8d4ec;
}
.cpu-label, .net-label {
    position: absolute;
    right: 0;
    padding: 0 4px;
    font-size: 14px;
    font-weight: 600;
    color: #7e8fae;
    background-color: #33466b;
}
.cpu-label {
    top: 3px;
}
.net-label {
    top: 32px;
}
.net-blip {
    position: absolute;
    height: 3px;
    top: 36px;
    background-color: #2c62b4;
}
.blip-a {
    left: 2px;
    width: 14px;
}
.blip-b {
    left: 22px;
    width: 5px;
}
.blip-c {
    left: 38px;
    width: 10px;
}
.shots {
    display: flex;
    gap: 2px;
    padding: 4px 0 0 2px;
}
.shot {
    flex: none;
    width: 39px;
    height: 35px;
    border: 1px solid #d3dcee;
    background:
        linear-gradient(#aab8d2, #aab8d2) 50% 2px / 22px 1px no-repeat,
        linear-gradient(#aab8d2, #aab8d2) 50% 5px / 24px 1px no-repeat,
        linear-gradient(#a9bede, #a9bede) 50% 25px / 33px 1px no-repeat,
        linear-gradient(#a3b3d0, #a3b3d0) 50% 13px / 10px 1px no-repeat,
        linear-gradient(#a3b3d0, #a3b3d0) 50% 17px / 10px 1px no-repeat,
        linear-gradient(#a3b3d0, #a3b3d0) 50% 28px / 10px 1px no-repeat,
        linear-gradient(#c7d9fb, #c7d9fb) 50% 8px / 33px 24px no-repeat,
        #3d5077;
}
.shot-first {
    width: 38px;
    border: 0;
    background: linear-gradient(90deg, #fff 0 18px, #c7d9fb 18px);
}
.mark {
    position: absolute;
    top: 0;
    bottom: 0;
}
.mark-a {
    left: 1px;
    width: 2px;
    background-color: #0a85c0;
}
.mark-b {
    left: 19px;
    width: 2px;
    background-color: #0a85c0;
}
.mark-c {
    left: 28px;
    width: 1px;
    background-color: #2f8a86;
}
.mark-d {
    left: 37px;
    width: 2px;
    background-color: #1a73e8;
}
.mark-e {
    left: 44px;
    width: 1px;
    background-color: #a03a52;
}
.lcp-flag {
    position: absolute;
    left: 26px;
    top: 15px;
    width: 14px;
    height: 6px;
    background-color: #c77d96;
}
.handle {
    position: absolute;
    top: 1px;
    height: 24px;
    background-color: #9a9a9a;
    border: 1px solid #0a85c0;
    border-radius: 4px;
}
.handle-left {
    left: -5px;
    width: 11px;
}
.handle-right {
    left: 13px;
    width: 12px;
}
.handle-right::before {
    content: "";
    display: block;
    width: 4px;
    height: 12px;
    margin: 5px auto 0;
    border-left: 1px solid #e6e6e6;
    border-right: 1px solid #e6e6e6;
}

/* ruler and tracks */
.ruler-wrap {
    height: 25px;
    display: flex;
}
.ruler {
    width: 809px;
    overflow: hidden;
    display: grid;
    grid-template-columns: repeat(6, 138px);
    font-size: 12px;
    line-height: 26px;
    text-align: right;
    color: #d0d0d0;
}
.ruler span {
    padding-right: 5px;
    border-right: 1px solid #3a3a3a;
}
.gutter {
    width: 20px;
    flex-shrink: 0;
    position: relative;
    background-color: #2a2a2a;
}
.gutter-up {
    position: absolute;
    left: 4px;
    top: 12px;
}
.gutter-down {
    position: absolute;
    left: 4px;
}
.gutter-thumb {
    position: absolute;
    left: 4px;
    width: 11px;
    background-color: #9e9e9e;
    border-radius: 6px;
}
.grid-lines {
    background-image: linear-gradient(90deg, transparent 137px, rgba(255, 255, 255, 0.08) 137px);
    background-size: 138px 100%;
    background-position: 1px 0;
}
.network {
    height: 144px;
    display: flex;
}
.net-canvas {
    width: 809px;
    position: relative;
}
.net-head {
    height: 18px;
    display: flex;
    align-items: center;
    padding-bottom: 5px;
}
.track-arrow {
    margin-left: 7px;
    border-top-color: #9a9a9a;
    border-left-width: 5px;
    border-right-width: 5px;
}
.track-arrow-side {
    margin: 0 2px 0 8px;
    border-left-color: #9a9a9a;
}
.track-name {
    margin-left: 4px;
    font-size: 13px;
    color: #c7c7c7;
    white-space: nowrap;
}
.track-indent {
    margin-left: 21px;
}
.legend {
    position: absolute;
    left: 96px;
    top: 0;
    height: 13px;
    display: flex;
    align-items: center;
    font-size: 10.500px;
    color: #d0d0d0;
}
.legend-item {
    display: flex;
    align-items: center;
    gap: 4px;
}
.legend-item::before {
    content: "";
    width: 10px;
    height: 10px;
    border-radius: 2px;
}
.legend-doc { width: 48px; }
.legend-doc::before { background-color: #4285f4; }
.legend-css { width: 47px; }
.legend-css::before { background-color: #c58af9; }
.legend-js { width: 39px; }
.legend-js::before { background-color: #98700c; }
.legend-font { width: 50px; }
.legend-font::before { background-color: #0a9bc7; }
.legend-img { width: 46px; }
.legend-img::before { background-color: #6fdc8c; }
.legend-media { width: 58px; }
.legend-media::before { background-color: #1ea446; }
.legend-wasm { width: 57px; }
.legend-wasm::before { background-color: #8b7cf6; }
.legend-other::before { background-color: #757575; }
.net-row {
    height: 21.300px;
    position: relative;
}
.net-item {
    position: absolute;
    top: 0;
    height: 20.500px;
    background-color: rgba(255, 255, 255, 0.03);
}
/* whisker line with its two end caps */
.net-item::before {
    content: "";
    position: absolute;
    left: 0;
    right: 0;
    top: 9.500px;
    height: 2px;
    background-color: #a8a8a8;
}
.net-item::after {
    content: "";
    position: absolute;
    left: 0;
    right: 0;
    top: 6.500px;
    height: 8px;
    border-left: 1px solid #c7c7c7;
    border-right: 1px solid #c7c7c7;
}
.net-box {
    position: absolute;
    top: 0;
    height: 20.500px;
    font-size: 13px;
    line-height: 20px;
    padding-left: 5px;
    overflow: hidden;
    z-index: 1;
}
.box-doc {
    background-color: #8ab4f8;
}
.box-tan {
    background: linear-gradient(90deg, #bd9f55 55%, #98700c 55%);
}
.box-light {
    background-color: #bd9f55;
}
.box-js {
    background: linear-gradient(225deg, #f00 8px, #98700c 8px);
    color: #5d4a20;
}
.box-css {
    background: linear-gradient(225deg, #f00 7px, #d48bff 7px);
}
.net-end {
    position: absolute;
    left: 0;
    right: 0;
    top: 126px;
    border-top: 1px solid #3d3d3d;
}
.net-down {
    top: 122px;
}
.splitter {
    height: 10px;
    display: flex;
    gap: 2px;
    align-items: center;
    justify-content: center;
    background-color: #333;
    border-top: 1px solid #555;
    border-bottom: 1px solid #555;
}
.splitter i {
    width: 2px;
    height: 2px;
    background-color: #ddd;
}
.tracks {
    height: 280px;
    display: flex;
}
.tracks-canvas {
    width: 809px;
    position: relative;
    overflow: hidden;
}
.track-row {
    height: 26px;
    display: flex;
    align-items: center;
    border-bottom: 1px solid #3a3a3a;
}
.main-head {
    height: 25px;
    display: flex;
    align-items: center;
    background-color: #2c2c2c;
}
.main-head .track-name {
    color: #dcdcdc;
}
.flame {
    height: 178px;
    background-color: #052249;
    overflow: hidden;
}
.flame-row {
    height: 21.300px;
    position: relative;
}
.fb {
    position: absolute;
    top: 0;
    height: 20px;
    font-size: 13px;
    line-height: 20px;
    padding-left: 7px;
    white-space: nowrap;
    overflow: hidden;
}
.fb-task {
    background-color: #7f7f7f;
    color: #3a3a3a;
}
.fb-tick {
    background-color: #5f6f8a;
    padding-left: 0;
}
.fb-js {
    background-color: #98700c;
    color: #3d2f0a;
}
.fb-blue {
    background-color: #2b7de9;
    padding-left: 0;
}
.fb-label {
    padding-left: 7px;
    color: #0a2750;
}
.fb-fn {
    background-color: #bdeffb;
    color: #333;
}
.fb-green {
    background-color: #c8f0dc;
    padding-left: 0;
}
.main-select {
    position: absolute;
    left: 0;
    top: 78px;
    bottom: 0;
    width: 11px;
    border-left: 3px solid #2a6fdb;
    border-top: 3px solid #2a6fdb;
    pointer-events: none;
}
.dcl-line {
    position: absolute;
    left: 51px;
    top: 0;
    bottom: 0;
    border-left: 1px dashed #d88a1e;
}
.tracks-down {
    top: 261px;
}
.tracks-thumb {
    top: 29px;
    height: 41px;
}

/* details tabs */
.details {
    height: 250px;
    display: flex;
    flex-direction: column;
    background-color: #3c3c3c;
    border-top: 1px solid #5a5a5a;
}
.details-tabs {
    height: 34px;
    flex-shrink: 0;
    font-size: 14px;
}
.details-tabs .tab {
    padding: 3px 13px 0;
}
.details-tabs .tab-active {
    padding: 3px 11px 0;
}
.details-body {
    flex: 1;
    min-height: 0;
    display: flex;
}
.summary {
    width: 809px;
    display: flex;
    flex-direction: column;
}
.summary-main {
    height: 201px;
    padding: 12px 0 0 10px;
    border-bottom: 1px solid #5a5a5a;
}
.summary-foot {
    flex: 1;
}
.range {
    font-size: 14.500px;
    word-spacing: 1.500px;
    line-height: 20px;
    color: #e3e3e3;
}
.summary-row {
    display: flex;
    margin-top: 16px;
}
.donut {
    width: 137px;
    height: 137px;
    margin-left: 6px;
    position: relative;
}
.donut svg {
    stroke-width: 27.500;
}
.slice-loading { stroke: #2b7de9; }
.slice-scripting { stroke: #98700c; }
.slice-system { stroke: #767676; }
.slice-idle { stroke: #979797; }
.donut-total {
    position: absolute;
    left: 0;
    right: 0;
    top: 59px;
    text-align: center;
    font-size: 14px;
    font-weight: 700;
    color: #fff;
}
.summary-legend {
    display: grid;
    grid-template-columns: 80px 16px auto;
    grid-auto-rows: 26.300px;
    column-gap: 11px;
    align-items: center;
    margin: 2px 0 0 46px;
    font-size: 14px;
    color: #e3e3e3;
}
.summary-legend span:nth-child(3n+1), .summary-legend b:nth-child(3n+1) {
    text-align: right;
}
.summary-legend b {
    color: #fff;
}
.swatch {
    height: 16px;
    border: 1px solid #666;
}
.swatch-loading { background-color: #2b7de9; }
.swatch-scripting { background-color: #98700c; }
.swatch-system { background-color: #767676; }
.swatch-idle { background-color: #979797; }
.gutter-light {
    background-color: #333;
}
.details-up {
    top: 14px;
}
.details-thumb {
    top: 30px;
    height: 146px;
}
.details-down {
    top: 197px;
}

/* bottom drawer */
.drawer {
    height: 42px;
    display: flex;
    align-items: center;
    background-color: #333;
    border-top: 1px solid #5a5a5a;
    padding-left: 9px;
    font-size: 14px;
    color: #a8a8a8;
}
.drawer-tab {
    height: 35px;
    display: flex;
    align-items: center;
    padding: 0 10px;
    border-radius: 4px;
}
.drawer-active {
    background-color: #262626;
    color: #7cacf8;
    padding: 0 12px;
    margin-right: 3px;
}
.drawer-plus {
    width: 18px;
    height: 18px;
    margin-left: 10px;
}
.drawer-icon {
    width: 21px;
    height: 20px;
    margin-right: 16px;
}
.drawer-icon-first {
    margin-left: auto;
}

/* windows taskbar */
.screen-strip {
    height: 4px;
    background-color: #3a3a3a;
}
.taskbar {
    height: 50px;
    display: flex;
    background-color: #101010;
    color: #fff;
}
.start-btn {
    width: 63px;
    display: flex;
    align-items: center;
    padding-left: 20px;
}
.start-btn svg {
    width: 21px;
    height: 21px;
    fill: #fff;
    stroke: none;
}
.task-item {
    width: 62px;
    display: flex;
    align-items: center;
    justify-content: center;
    position: relative;
}
.task-item svg {
    stroke: none;
}
.app-panel {
    width: 27px;
    height: 18px;
}
.app-icon {
    width: 30px;
    height: 30px;
}
.task-open::after {
    content: "";
    position: absolute;
    left: 6px;
    right: 6px;
    bottom: 0;
    height: 3px;
    background-color: #76b9ed;
}
.task-multi::before {
    content: "";
    position: absolute;
    right: 6px;
    bottom: 0;
    width: 11px;
    height: 3px;
    background-color: #4c86b4;
    z-index: 1;
}
.task-active {
    background-color: #333;
}
.task-active::after {
    content: "";
    position: absolute;
    left: 1px;
    right: 0;
    bottom: 0;
    height: 3px;
    background-color: #76b9ed;
}
.tray {
    margin-left: auto;
    display: flex;
    align-items: center;
}
.tray-item {
    width: 30px;
    display: flex;
    justify-content: center;
    align-items: center;
}
.tray-item svg {
    width: 16px;
    stroke: #e6e6e6;
    stroke-width: 1.100;
}
.tray-item .tray-app {
    width: 20px;
    height: 20px;
    stroke: none;
}
.tray-item .tray-wide {
    width: 20px;
}
.tray-dim {
    stroke: #777;
}
.tray-item .icon-fill {
    fill: #e6e6e6;
}
.clock {
    width: 90px;
    line-height: 22px;
    text-align: center;
}
.clock-time {
    font-size: 13.500px;
}
.clock-date {
    font-size: 14.500px;
    letter-spacing: 0.400px;
    white-space: nowrap;
}
.notify {
    width: 68px;
    position: relative;
    display: flex;
    align-items: center;
    padding-left: 17px;
}
.notify svg {
    width: 20px;
    height: 20px;
    stroke: none;
}
.notify-badge {
    position: absolute;
    left: 25px;
    top: 10px;
    width: 20px;
    height: 20px;
    border-radius: 50%;
    border: 1px solid #9a9a9a;
    background-color: #2a2a2a;
    font-size: 13px;
    line-height: 18px;
    text-align: center;
}
```
